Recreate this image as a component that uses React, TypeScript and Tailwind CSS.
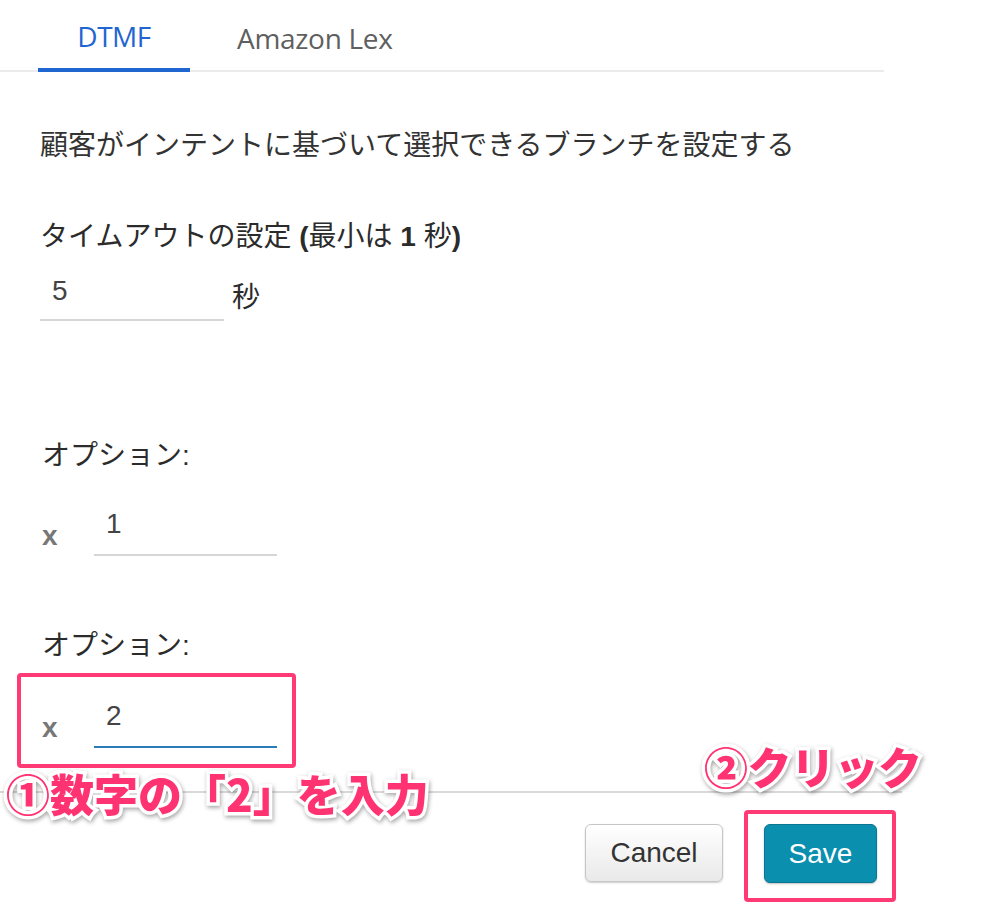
import React from "react";

const jp = "font-['Liberation_Sans','Noto_Sans_CJK_JP',sans-serif]";
const callout =
  "font-['Noto_Sans_CJK_JP',sans-serif] font-black text-[#ff3272] leading-none whitespace-nowrap [paint-order:stroke_fill] [-webkit-text-stroke:7px_white] [filter:drop-shadow(1px_2px_2px_rgba(0,0,0,0.35))]";

function Tabs() {
  return (
    <div className="flex w-[884px] h-[72px] border-b-2 border-[#ebebeb] pl-[38px]">
      <div className="w-[152px] h-[72px] -mb-[2px] border-b-4 border-[#1f66d1] flex items-center justify-center pt-[4px]">
        <span className="text-[28px] text-[#1f66d1] font-medium font-['Open_Sans',sans-serif] tracking-[-0.5px]">DTMF</span>
      </div>
      <div className="h-[70px] flex items-center pl-[47px] pt-[6px]">
        <span className="text-[28px] text-[#5f5f5f] font-medium font-['Open_Sans',sans-serif] tracking-[-0.3px]">Amazon Lex</span>
      </div>
    </div>
  );
}

function UnderlineInput(props: { value: string; focused?: boolean }) {
  const { value, focused } = props;
  return (
    <div
      className={
        "w-[183px] h-[65px] pl-[12px] pt-[13px] text-[28px] leading-[40px] text-[#444] " +
        (focused ? "border-b-2 border-[#2b7bb9]" : "border-b-2 border-[#d6d6d6]")
      }
    >
      {value}
    </div>
  );
}

function OptionRow(props: { value: string; focused?: boolean; mark?: boolean }) {
  const { value, focused, mark } = props;
  return (
    <div className="relative flex items-start w-fit">
      {mark && (
        <div className="absolute left-[-23px] top-[-10px] w-[279px] h-[95px] border-[4px] border-[#ff3a74] rounded-[4px]" />
      )}
      <div className="w-[54px] pt-[25px] pl-[2px] text-[28px] leading-[40px] font-bold text-[#777]">x</div>
      <UnderlineInput value={value} focused={focused} />
    </div>
  );
}

export default function App() {
  return (
    <div className={"relative w-[986px] h-[910px] bg-white overflow-hidden text-[#2e2e2e] " + jp}>
      <Tabs />
      <div className="flex flex-col pl-[40px]">
        <p className="mt-[54px] text-[28px] leading-[40px] text-[#333]">顧客がインテントに基づいて選択できるブランチを設定する</p>
        <p className="mt-[51px] text-[28px] leading-[40px] text-[#2b2b2b]">
          タイムアウトの設定 <span className="font-bold">(</span>最小は <span className="font-bold">1</span> 秒<span className="font-bold">)</span>
        </p>
        <div className="flex items-start">
          <div className="w-[184px] h-[64px] border-b-2 border-[#d6d6d6] pl-[12px] pt-[14px] text-[28px] leading-[40px] text-[#444]">5</div>
          <span className="ml-[8px] pt-[21px] text-[28px] leading-[40px] text-[#2b2b2b]">秒</span>
        </div>
        <p className="mt-[115px] text-[28px] leading-[40px] text-[#2b2b2b] pl-[2px]">オプション:</p>
        <div className="mt-[15px]">
          <OptionRow value="1" />
        </div>
        <p className="mt-[70px] text-[28px] leading-[40px] text-[#2b2b2b] pl-[2px]">オプション:</p>
        <div className="mt-[17px]">
          <OptionRow value="2" focused mark />
        </div>
      </div>

      <div className="mt-[43px] w-[902px] border-t-2 border-[#d9d9d9] flex justify-end gap-[41px] pr-[25px] pt-[31px]">
        <button className="w-[138px] h-[58px] rounded-[6px] border border-[#c6c6c6] bg-gradient-to-b from-white to-[#e9e9e9] shadow-[0_1px_2px_rgba(0,0,0,0.2)] text-[28px] text-[#333] font-['Liberation_Sans',sans-serif]">
          Cancel
        </button>
        <div className="relative">
          <div className="absolute left-[-20px] top-[-14px] w-[152px] h-[92px] border-[4px] border-[#ff3a74] rounded-[4px]" />
          <button className="relative w-[113px] h-[59px] rounded-[6px] border border-[#0b7592] bg-[#0b8fae] shadow-[0_1px_2px_rgba(0,0,0,0.25)] text-[28px] text-white font-['Liberation_Sans',sans-serif]">
            Save
          </button>
        </div>
      </div>

      <div className={"absolute left-[6px] top-[771px] text-[44px] tracking-[0px] " + callout}>①数字の「2」を入力</div>
      <div className={"absolute left-[704px] top-[744px] text-[44px] tracking-[-0.5px] " + callout}>②クリック</div>
    </div>
  );
}
